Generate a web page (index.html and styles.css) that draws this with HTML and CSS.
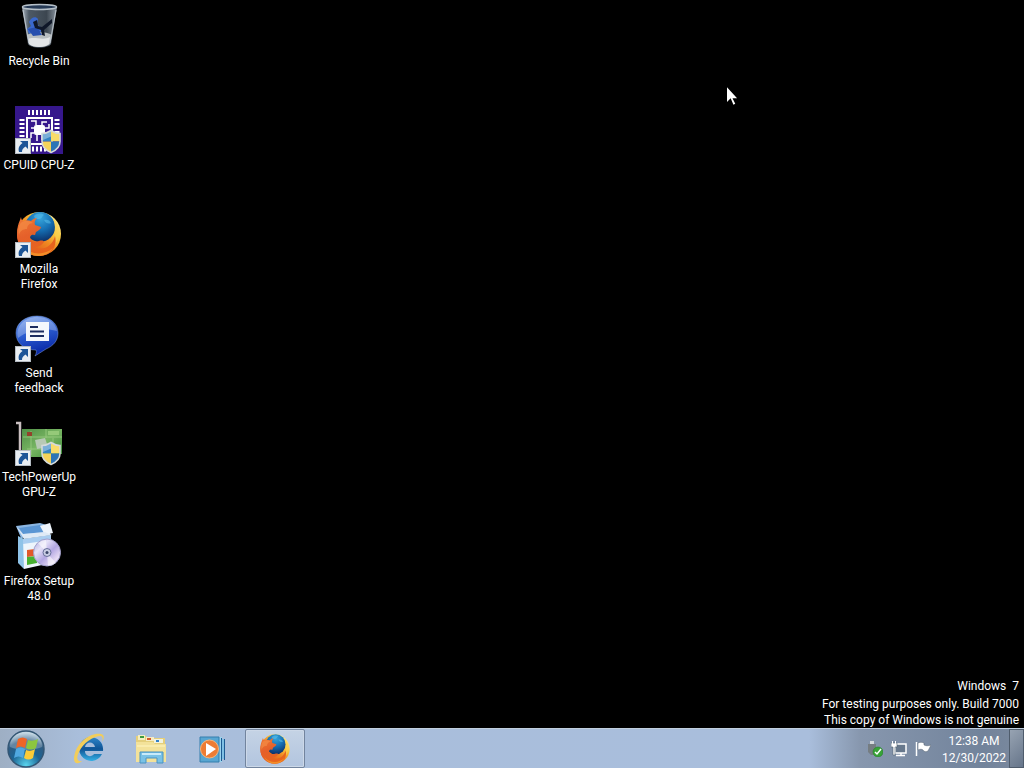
FILE: index.html
```html
<!DOCTYPE html>
<html lang="en">
<head>
    <meta charset="UTF-8">
    <meta name="viewport" content="width=device-width, initial-scale=1.0">
    <title>Desktop</title>
    <link rel="stylesheet" href="styles.css">
</head>
<body>
    <!-- Shared icon parts -->
    <svg class="sprite" aria-hidden="true">
        <defs>
            <linearGradient id="fox" x1="0" y1="0" x2="0.4" y2="1">
                <stop offset="0" stop-color="#f07a35"/>
                <stop offset="0.5" stop-color="#e5602a"/>
                <stop offset="1" stop-color="#e8641c"/>
            </linearGradient>
            <linearGradient id="tail" x1="0.9" y1="0.1" x2="0.2" y2="0.9">
                <stop offset="0" stop-color="#fdf0a0"/>
                <stop offset="0.3" stop-color="#fbc93c"/>
                <stop offset="0.55" stop-color="#f08a22"/>
                <stop offset="1" stop-color="#dc4a1a"/>
            </linearGradient>
            <radialGradient id="globe" cx="0.5" cy="0.2" r="0.8">
                <stop offset="0" stop-color="#38a6dc"/>
                <stop offset="0.5" stop-color="#1670b4"/>
                <stop offset="1" stop-color="#0c2f68"/>
            </radialGradient>
            <linearGradient id="bin" x1="0" y1="0" x2="1" y2="0">
                <stop offset="0" stop-color="#aab4bf"/>
                <stop offset="0.2" stop-color="#4d5965"/>
                <stop offset="0.7" stop-color="#3c4650"/>
                <stop offset="1" stop-color="#8a949e"/>
            </linearGradient>
            <linearGradient id="bubble" x1="0" y1="0" x2="0.3" y2="1">
                <stop offset="0" stop-color="#7ba4ee"/>
                <stop offset="0.45" stop-color="#2f62d4"/>
                <stop offset="1" stop-color="#0a2aa8"/>
            </linearGradient>
            <linearGradient id="board" x1="0" y1="0" x2="1" y2="1">
                <stop offset="0" stop-color="#4f8f45"/>
                <stop offset="0.5" stop-color="#78b563"/>
                <stop offset="1" stop-color="#3b8a3a"/>
            </linearGradient>
            <linearGradient id="disc" x1="0" y1="0" x2="1" y2="1">
                <stop offset="0" stop-color="#a9a5dc"/>
                <stop offset="0.3" stop-color="#e6e2f8"/>
                <stop offset="0.55" stop-color="#b3a7e2"/>
                <stop offset="0.8" stop-color="#e8dcf4"/>
                <stop offset="1" stop-color="#8f96d8"/>
            </linearGradient>
            <radialGradient id="orb" cx="0.5" cy="0.95" r="0.9">
                <stop offset="0" stop-color="#5ad4ee"/>
                <stop offset="0.45" stop-color="#1c6494"/>
                <stop offset="0.75" stop-color="#305c82"/>
                <stop offset="1" stop-color="#b4cddd"/>
            </radialGradient>
            <linearGradient id="ie" x1="0" y1="0" x2="0" y2="1">
                <stop offset="0" stop-color="#2f86ca"/>
                <stop offset="0.5" stop-color="#0f5496"/>
                <stop offset="1" stop-color="#35b0e4"/>
            </linearGradient>
            <clipPath id="shield-clip">
                <path d="M11 1c3 2 6 3 9 3v8c0 5-4 9-9 11-5-2-9-6-9-11V4c3 0 6-1 9-3z"/>
            </clipPath>
        </defs>
        <symbol id="arrow" viewBox="0 0 16 16">
            <path d="M0 0h16v16H0z" fill="#b4bbc2"/>
            <path d="M1 1h14v14H1z" fill="#e9eef2"/>
            <path d="M5 3h8v8l-2.500-2.500C8 10 7 11.500 7 14H4c-1-4 0-6.500 3.500-9z" fill="#1d5597"/>
        </symbol>
        <symbol id="shield" viewBox="0 0 22 24">
            <g clip-path="url(#shield-clip)">
                <path d="M0 0h11v12H0z" fill="#3484c4"/>
                <path d="M11 0h11v12H11z" fill="#f8dc6a"/>
                <path d="M0 12h11v12H0z" fill="#f5d35a"/>
                <path d="M11 12h11v12H11z" fill="#2c74b6"/>
                <path d="M2 4l9-3v6l-9 4z" fill="#fff" opacity="0.35"/>
            </g>
            <path d="M11 1c3 2 6 3 9 3v8c0 5-4 9-9 11-5-2-9-6-9-11V4c3 0 6-1 9-3z" fill="none" stroke="#d5dada" stroke-width="1.600"/>
        </symbol>
        <symbol id="firefox" viewBox="0 0 48 48">
            <circle cx="24" cy="24" r="22" fill="url(#tail)"/>
            <circle cx="25" cy="17" r="15" fill="url(#globe)"/>
            <path d="M19 6c3-3 8-3 10-1-2 1-2 4-5 4s-4 0-5-3zM29 10c3-1 6 0 7 3-2 1-5 1-7-3z" fill="#5cc4ee" opacity="0.5"/>
            <path d="M38 8c5 5 7 11 6 17-1 7-5 12-10 15 6-8 8-20 4-32z" fill="#fcd052" opacity="0.6"/>
            <path d="M6 7c0 2 1 3 2 4 3-1 6-1 8 0 2-2 4-3 6-3-2 2-3 4-2 7l6 2c0 2-2 3-5 5-1 2 0 3-2 3-3-1-5 2-3 5 2 3 5 2 8 1 3-1 5 0 5 1-2 3-5 5-10 5 9 4 18 0 21-11 3 13-6 20-17 20C11 46 2 36 2 25c0-6 1-11 3-15z" fill="url(#fox)"/>
            <path d="M5 14c3-4 8-4 13-1-4 0-6 3-6 6-4 0-7 2-8 6-1-4-1-7 1-11z" fill="#f5914a" opacity="0.6"/>
            <path d="M8 36c7 9 21 10 30 2-4 6-9 8-15 8-7 0-12-4-15-10z" fill="#f8a02c" opacity="0.7"/>
        </symbol>
    </svg>

    <main class="desktop">
        <ul class="icons">
            <li>
                <button class="icon" type="button">
                    <svg viewBox="0 0 48 48" aria-hidden="true">
                        <path d="M7 5h35l-6 37c-3 5-20 5-23 0z" fill="url(#bin)"/>
                        <path d="M12 33c5-4 19-4 25 0l-2 9c-4 4-17 4-21 0z" fill="#b9bec1"/>
                        <path d="M13 37c6-3 15 2 22-2l-1 7c-4 4-16 4-20 0z" fill="#e4e6e7"/>
                        <path d="M14 20c2-5 7-6 9-3l-1 6c4 1 5 4 4 7l-6-1-6 3-2-5 4-3z" fill="#3a68cc"/>
                        <path d="M13 27l9-2 5 8-9 1z" fill="#284fae"/>
                        <path d="M37 17L27 25l-4-1-1-6-4 2 2 6 6 2 1 5 3 1-1-6 8-7z" fill="#0f1728"/>
                        <ellipse cx="24.500" cy="5" rx="17" ry="2.500" fill="#263a56" stroke="#b6c0c9" stroke-width="1.500"/>
                        <path d="M8 8l6 33M41 8l-6 33" stroke="#c4ccd3" stroke-width="1.200" opacity="0.8"/>
                    </svg>
                    <span>Recycle Bin</span>
                </button>
            </li>
            <li>
                <button class="icon" type="button">
                    <svg viewBox="0 0 48 48" aria-hidden="true">
                        <path d="M0 0h48v48H0z" fill="#36178c"/>
                        <path d="M13 6.500h22M13 43h22" stroke="#fff" stroke-width="5" stroke-dasharray="2 2"/>
                        <path d="M7 13v22M42 13v22" stroke="#fff" stroke-width="5" stroke-dasharray="2 2"/>
                        <path d="M12 12h25v26H12z" fill="none" stroke="#fff" stroke-width="2"/>
                        <rect x="19" y="19" width="11" height="10" rx="2" fill="#fff"/>
                        <path d="M21 19v-4h-5M27 19v-3h5M30 22h4v-4M19 22h-3M19 27h-3v5M30 27h4M22 29v6M27 29v5" fill="none" stroke="#fff" stroke-width="1.500"/>
                        <use href="#arrow" x="0" y="32" width="16" height="16"/>
                        <use href="#shield" x="25" y="23" width="22" height="25"/>
                    </svg>
                    <span>CPUID CPU-Z</span>
                </button>
            </li>
            <li>
                <button class="icon" type="button">
                    <svg viewBox="0 0 48 48" aria-hidden="true">
                        <use href="#firefox" x="0" y="0" width="48" height="48"/>
                        <use href="#arrow" x="0" y="32" width="16" height="16"/>
                    </svg>
                    <span>Mozilla Firefox</span>
                </button>
            </li>
            <li>
                <button class="icon" type="button">
                    <svg viewBox="0 0 48 48" aria-hidden="true">
                        <path d="M22 2c12 0 21 7 21 17 0 8-5 13-12 16l-11 7c1-2 2-4 1-6C9 36 1 29 1 19S10 2 22 2z" fill="url(#bubble)" stroke="#7f9ce0" stroke-width="0.500"/>
                        <path d="M22 3c11 0 19 6 20 14-9-3-28-2-39 7C0 13 9 3 22 3z" fill="#fff" opacity="0.28"/>
                        <path d="M11 8h23v19H11z" fill="#f4f7fc"/>
                        <path d="M15 13h8M15 17.500h14M15 22h14" stroke="#1c2c60" stroke-width="2"/>
                        <use href="#arrow" x="0" y="32" width="16" height="16"/>
                    </svg>
                    <span>Send feedback</span>
                </button>
            </li>
            <li>
                <button class="icon" type="button">
                    <svg viewBox="0 0 48 48" aria-hidden="true">
                        <path d="M7 11h40v25h-4v3H16v-3H7z" fill="url(#board)"/>
                        <path d="M8 19h39M12 31h32M16 13v24M31 11v9M38 20v17" stroke="#a3d289" stroke-width="1" opacity="0.7"/>
                        <path d="M12 14h5v4h-5z" fill="#93412b"/>
                        <path d="M20 22l10-2 3 9-11 2z" fill="#b8c9b5"/>
                        <path d="M33 13h11v4H33z" fill="#95c979"/>
                        <path d="M1 5h4v34" fill="none" stroke="#c9bfc0" stroke-width="2.500"/>
                        <use href="#arrow" x="0" y="32" width="16" height="16"/>
                        <use href="#shield" x="25" y="23" width="22" height="25"/>
                    </svg>
                    <span>TechPowerUp GPU-Z</span>
                </button>
            </li>
            <li>
                <button class="icon" type="button">
                    <svg viewBox="0 0 48 48" aria-hidden="true">
                        <path d="M1 4l24-3 10 3v9L6 16z" fill="#8bb6e2"/>
                        <path d="M4 6l4 6 21-2-4-7z" fill="#5b96d4"/>
                        <path d="M25 4l10-3 3 10-8 2z" fill="#eef4fb"/>
                        <path d="M1 4l7 8 22-2 7 3-28 4z" fill="#dfeaf6"/>
                        <path d="M3 14l6 3v30l-6-6z" fill="#8fc3e8"/>
                        <path d="M8 17l28-4v28L9 47z" fill="#eef5fc"/>
                        <path d="M8 17l28-4v5L8 22z" fill="#a9cdf0"/>
                        <path d="M12 28l8-1v7l-8 1z" fill="#e2582a"/>
                        <path d="M12 35l10-1v7l-10 2z" fill="#48b031"/>
                        <path d="M20 25l6-1v9l-6 1z" fill="#3f9a44"/>
                        <circle cx="32" cy="30.500" r="13.500" fill="url(#disc)" stroke="#a2a0cc"/>
                        <path d="M32 31L23 21a14 14 0 0 1 8-3zM32 31l9 10a14 14 0 0 1-8 3z" fill="#fff" opacity="0.55"/>
                        <circle cx="32" cy="30.500" r="4" fill="#c9cde4" stroke="#686f9a"/>
                        <circle cx="32" cy="30.500" r="1.500" fill="#3a4468"/>
                    </svg>
                    <span>Firefox Setup 48.0</span>
                </button>
            </li>
        </ul>

        <div class="watermark">
            <p class="edition">Windows&nbsp; 7</p>
            <p>For testing purposes only. Build 7000</p>
            <p>This copy of Windows is not genuine</p>
        </div>
    </main>

    <footer class="taskbar">
        <button class="start" type="button" aria-label="Start">
            <svg viewBox="0 0 38 38" aria-hidden="true">
                <circle cx="19" cy="19" r="18" fill="url(#orb)" stroke="#335674" stroke-width="1.500"/>
                <path d="M3 17C3 7 10 2 19 2s16 5 16 15c-9 4-23 4-32 0z" fill="#fff" opacity="0.25"/>
                <path d="M11 9c3-2 6-2 9 0l-2 9c-3-2-6-2-9 0z" fill="#ee6527"/>
                <path d="M21 10c3 1 6 1 10-1l-2 9c-4 2-7 2-10 0z" fill="#8cc63f"/>
                <path d="M9 19c3-2 6-2 9 0l-2 9c-3-2-6-2-9 0z" fill="#50a8e0"/>
                <path d="M19 20c3 1 6 1 9-1l-2 9c-3 2-6 2-9 0z" fill="#fbcb36"/>
            </svg>
        </button>

        <nav class="programs" aria-label="Programs">
            <button type="button" aria-label="Internet Explorer">
                <svg viewBox="0 0 32 32" aria-hidden="true">
                    <path d="M17 4a12 12 0 1 0 12 17h-8c-3 4-9 2-9-3h18C31 10 25 4 17 4zm-5 10c1-6 9-6 10 0z" fill="url(#ie)" fill-rule="evenodd"/>
                    <path d="M28 3C20 3 10 10 6 19c-3 6-2 10 3 9-6 5-10 1-7-8C5 9 18-1 28 1c4 1 3 5 1 8 1-3 1-5-1-6z" fill="#f2cd5a"/>
                </svg>
            </button>
            <button type="button" aria-label="Windows Explorer">
                <svg viewBox="0 0 32 32" aria-hidden="true">
                    <path d="M1 3h10l2 2h17v23H1z" fill="#e5cf7b"/>
                    <path d="M3 2h7v5H3z" fill="#f4eec0"/>
                    <path d="M5 3h4v2H5z" fill="#3d9a40"/>
                    <path d="M11 4h8v4h-8z" fill="#f6ecc4"/>
                    <path d="M12 5h4v2h-4z" fill="#d45b2a"/>
                    <path d="M19 6h9v4h-9z" fill="#f2f3df"/>
                    <path d="M21 7h3v2h-3z" fill="#3480c8"/>
                    <path d="M1 9h17l2 2h11v18H1z" fill="#f3e29a"/>
                    <path d="M2 13h28" stroke="#fff6c2"/>
                    <path d="M5 19h23v11h-6v-5H11v5H5z" fill="#79c2e6" stroke="#4a93c2"/>
                    <path d="M7 20h19v2H7z" fill="#c8ebfa"/>
                </svg>
            </button>
            <button type="button" aria-label="Windows Media Player">
                <svg viewBox="0 0 32 32" aria-hidden="true">
                    <path d="M10 6h18v20H10z" fill="#7fc0e4"/>
                    <path d="M10 4h15v25H10z" fill="#9bd4ee"/>
                    <path d="M3 4h19v25H3z" fill="#58a6d2" stroke="#357ead"/>
                    <path d="M24.500 5v23M27.500 6v21" stroke="#1d5a92"/>
                    <circle cx="12.500" cy="16" r="9" fill="#ee7c33" stroke="#f7b579"/>
                    <path d="M9 10l10 6-10 7z" fill="#fff"/>
                </svg>
            </button>
            <button class="running" type="button" aria-label="Mozilla Firefox">
                <svg viewBox="0 0 48 48" aria-hidden="true">
                    <use href="#firefox" x="0" y="0" width="48" height="48"/>
                </svg>
            </button>
        </nav>

        <div class="tray">
            <button type="button" aria-label="Safely remove hardware">
                <svg viewBox="0 0 16 16" aria-hidden="true">
                    <path d="M3 0h4v3H3z" fill="#d5dade"/>
                    <path d="M1 3h8v8l-3 3H4l-3-3z" fill="#757d82"/>
                    <circle cx="11" cy="11" r="5" fill="#38a338" stroke="#238026" stroke-width="0.600"/>
                    <path d="M8 11l2 2 4-5" fill="none" stroke="#fff" stroke-width="1.500"/>
                </svg>
            </button>
            <button type="button" aria-label="Network">
                <svg viewBox="0 0 16 16" aria-hidden="true">
                    <path d="M4 3h11v9H4z" fill="#67788c" stroke="#fff" stroke-width="1.500"/>
                    <path d="M5 14.500h9M10 12v2" stroke="#fff" stroke-width="1.500"/>
                    <path d="M0 2h6v4H4v8H2V6H0z" fill="#fff" stroke="#53616f" stroke-width="0.600"/>
                    <path d="M1.500 0v3M4.500 0v3" stroke="#fff"/>
                </svg>
            </button>
            <button type="button" aria-label="Action Center">
                <svg viewBox="0 0 16 16" aria-hidden="true">
                    <path d="M1.500 1v14" stroke="#fff" stroke-width="1.500"/>
                    <path d="M3 2c2-1 4-1 6 0v2c2 1 4 1 7 0l-3 6c-2 1-4 1-5-1-1-1-3-1-5 0z" fill="#fff" stroke="#505e6d" stroke-width="0.500"/>
                </svg>
            </button>
            <time class="clock" datetime="2022-12-30T00:38">12:38 AM<br>12/30/2022</time>
            <button class="show-desktop" type="button" aria-label="Show desktop"></button>
        </div>
    </footer>

    <svg class="cursor" viewBox="0 0 12 19" aria-hidden="true">
        <path d="M0 0v16l4-4 3 7 2-1-3-6h5z" fill="#fff"/>
    </svg>
</body>
</html>
```
FILE: styles.css
```css
* {
    box-sizing: border-box;
}
body {
    font-family: Roboto, "Open Sans", sans-serif;
    font-size: 12px;
    color: #fff;
    margin: 0;
    background-color: #000;
    min-height: 100vh;
    display: flex;
    flex-direction: column;
}
button {
    background: none;
    border: none;
    padding: 0;
    margin: 0;
    font: inherit;
    color: inherit;
}
svg {
    display: block;
}
.sprite {
    position: absolute;
    width: 0;
    height: 0;
}
.desktop {
    flex: 1;
    display: flex;
    justify-content: space-between;
    align-items: flex-start;
}
.icons {
    list-style: none;
    margin: 0;
    padding: 2px 0 0;
    display: grid;
    grid-auto-rows: 104px;
}
.icon {
    width: 78px;
    display: flex;
    flex-direction: column;
    align-items: center;
    gap: 4px;
    line-height: 15px;
    text-align: center;
}
.icon svg {
    width: 48px;
    height: 48px;
}
.watermark {
    align-self: flex-end;
    padding: 0 5px;
    text-align: right;
    line-height: 16px;
}
.watermark p {
    margin: 0;
}
.watermark .edition {
    margin-bottom: 2px;
}
.taskbar {
    height: 40px;
    display: flex;
    border-top: 1px solid #c1cfdf;
    background: linear-gradient(to right, #9eafc4, #a9bedb 80px, #a9bedc 79%, #8797ae 84%, #72839b 96%, #7c8a9e);
}
.start {
    width: 59px;
    padding-left: 7px;
}
.start svg {
    width: 38px;
    height: 38px;
}
.programs {
    flex: 1;
    display: flex;
    gap: 2px;
}
.programs button {
    width: 60px;
    display: flex;
    align-items: center;
    justify-content: center;
}
.programs svg {
    width: 32px;
    height: 32px;
}
.programs .running {
    border: 1px solid #72849e;
    border-radius: 2px;
    background: linear-gradient(#c5d3e5, #b2c5df);
    box-shadow: inset 0 0 0 1px #ccd8e8;
}
.tray {
    display: flex;
    align-items: center;
    gap: 8px;
}
.tray svg {
    width: 16px;
    height: 16px;
}
.clock {
    width: 70px;
    padding-top: 2px;
    line-height: 17px;
    text-align: center;
}
.show-desktop {
    align-self: stretch;
    width: 15px;
    margin-left: -8px;
    border: 1px solid #4f5c6c;
    background: linear-gradient(135deg, #97a3b2, #66758a);
}
.cursor {
    position: absolute;
    left: 727px;
    top: 87px;
    width: 11px;
    height: 18px;
}
```
